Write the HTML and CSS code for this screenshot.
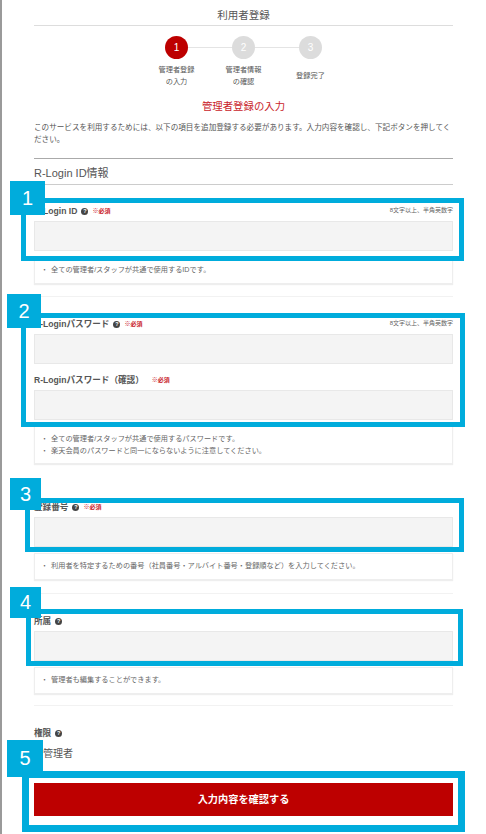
FILE: index.html
```html
<!DOCTYPE html>
<html lang="ja">
<head>
<meta charset="utf-8">
<title>利用者登録</title>
<link rel="stylesheet" href="styles.css">
</head>
<body>
<main class="page">
  <h1 class="title">利用者登録</h1>
  <div class="track">
    <span class="dot dot-on">1</span><span class="link"></span>
    <span class="dot">2</span><span class="link"></span>
    <span class="dot">3</span>
  </div>
  <div class="track-labels">
    <span class="step-label">管理者登録<br>の入力</span>
    <span class="step-label">管理者情報<br>の確認</span>
    <span class="step-label">登録完了</span>
  </div>
  <h2 class="lead">管理者登録の入力</h2>
  <p class="intro">このサービスを利用するためには、以下の項目を追加登録する必要があります。入力内容を確認し、下記ボタンを押してください。</p>
  <h3 class="section">R-Login ID情報</h3>

  <section class="group g1">
    <div class="label-row"><span class="label">R-Login ID</span><span class="help">?</span><span class="req">※必須</span><span class="hint">8文字以上、半角英数字</span></div>
    <div class="input"></div>
    <ul class="note"><li>全ての管理者/スタッフが共通で使用するIDです。</li></ul>
  </section>

  <section class="group g2">
    <div class="label-row"><span class="label">R-Loginパスワード</span><span class="help">?</span><span class="req">※必須</span><span class="hint">8文字以上、半角英数字</span></div>
    <div class="input"></div>
    <div class="label-row second"><span class="label">R-Loginパスワード（確認）</span><span class="req wide">※必須</span></div>
    <div class="input"></div>
    <ul class="note"><li>全ての管理者/スタッフが共通で使用するパスワードです。</li><li>楽天会員のパスワードと同一にならないように注意してください。</li></ul>
  </section>

  <section class="group g3">
    <div class="label-row"><span class="label">登録番号</span><span class="help">?</span><span class="req">※必須</span></div>
    <div class="input"></div>
    <ul class="note"><li>利用者を特定するための番号（社員番号・アルバイト番号・登録順など）を入力してください。</li></ul>
  </section>

  <section class="group g4">
    <div class="label-row"><span class="label">所属</span><span class="help">?</span></div>
    <div class="input"></div>
    <ul class="note"><li>管理者も編集することができます。</li></ul>
  </section>

  <div class="role">
    <div class="label-row"><span class="label">権限</span><span class="help">?</span></div>
    <p class="role-value">管理者</p>
  </div>
  <button class="submit" type="button">入力内容を確認する</button>
</main>

<div class="frame f1"></div><div class="badge b1">1</div>
<div class="frame f2"></div><div class="badge b2">2</div>
<div class="frame f3"></div><div class="badge b3">3</div>
<div class="frame f4"></div><div class="badge b4">4</div>
<div class="frame f5"></div><div class="badge b5">5</div>
</body>
</html>
```
FILE: styles.css
```css
* { box-sizing: border-box; }
html, body { margin: 0; height: 834px; overflow: hidden; background: #fff; }
body {
  position: relative;
  border-left: 2px solid #9a9a9a;
  font-family: "Liberation Sans", "Noto Sans CJK JP", sans-serif;
  color: #555;
}
.page { width: 419px; margin-left: 32px; padding-top: 8px; }
.title {
  margin: 0; height: 18px; line-height: 15px;
  font-size: 10.5px; font-weight: 400; text-align: center; color: #555;
  border-bottom: 1px solid #ddd;
}
.track { display: flex; justify-content: center; align-items: center; margin-top: 10px; height: 23px; }
.dot {
  width: 23px; height: 23px; border-radius: 50%; background: #dcdcdc; color: #fff;
  font-size: 10px; line-height: 23px; text-align: center; flex: none;
}
.dot-on { background: #bd0000; }
.link { width: 44px; height: 1px; background: #e4e4e4; flex: none; }
.track-labels { display: flex; justify-content: center; margin-top: 5px; height: 23px; }
.step-label {
  width: 67px; display: flex; align-items: center; justify-content: center; text-align: center;
  font-size: 7.2px; line-height: 11.5px; color: #555;
}
.lead { margin: 13px 0 0; font-size: 10.4px; line-height: 14px; font-weight: 400; color: #c9242b; text-align: center; }
.intro { margin: 8px 0 0; font-size: 7.6px; line-height: 12px; color: #555; }
.section {
  margin: 12px 0 0; height: 27px; padding-top: 6px;
  font-size: 11px; line-height: 16px; font-weight: 400; color: #555;
  border-top: 1px solid #aaa; border-bottom: 1px solid #ccc;
}
.group { border-bottom: 1px solid #f2f2f2; }
.g1 { margin-top: 20px; height: 92px; }
.g2 { margin-top: 21px; height: 0; }
.g2 { height: 147px; }
.g3 { margin-top: 10px; }
.g3 { margin-top: 36px; height: 93px; padding-top: 0; }
.g4 { margin-top: 21px; height: 91px; }
.label-row { display: flex; align-items: center; height: 12px; }
.second { margin-top: 10px; }
.label { font-size: 8.6px; line-height: 12px; font-weight: 700; color: #555; }
.help {
  width: 7px; height: 7px; border-radius: 50%; margin-left: 4px; background: #444; color: #fff;
  font-size: 5.5px; line-height: 7px; font-weight: 700; text-align: center; flex: none;
}
.req { margin-left: 4px; font-size: 6px; font-weight: 700; color: #c9242b; line-height: 12px; }
.wide { margin-left: 8px; }
.hint { margin-left: auto; font-size: 6px; color: #666; position: relative; top: -2px; }
.input { height: 30px; margin-top: 4px; background: #f4f4f4; border: 1px solid #e8e8e8; }
.note {
  list-style: none; margin: 6px 0 0; padding: 6px 9px 7px;
  background: #fff; border: 1px solid #eee; box-shadow: 0 1px 1px #eee;
  font-size: 7.2px; line-height: 11.5px; color: #666;
}
.note li { padding-left: 7px; position: relative; }
.note li::before { content: "・"; position: absolute; left: -3px; font-size: 7px; }
.role { margin-top: 21px; }
.role-value { margin: 8px 0 0 9px; font-size: 10px; line-height: 14px; color: #555; }
.submit {
  display: block; width: 419px; height: 33px; margin-top: 22px; padding: 0; border: 0;
  background: #bd0000; color: #fff; font: 700 10.2px/33px "Liberation Sans", "Noto Sans CJK JP", sans-serif;
}
.frame { position: absolute; border: 5px solid #00acdc; }
.f1 { left: 19px; top: 198px; width: 443px; height: 63px; }
.f2 { left: 19px; top: 313px; width: 444px; height: 114px; }
.f3 { left: 23px; top: 498px; width: 439px; height: 54px; }
.f4 { left: 24px; top: 609px; width: 437px; height: 57px; }
.f5 { left: 20px; top: 771px; width: 443px; height: 61px; border-width: 7px; }
.badge {
  position: absolute; background: #00acdc; color: #fff; text-align: center;
  font-size: 20px;
}
.b1 { left: 8px; top: 181px; width: 35px; height: 34px; line-height: 34px; }
.b2 { left: 5px; top: 294px; width: 34px; height: 34px; line-height: 34px; }
.b3 { left: 8px; top: 478px; width: 31px; height: 32px; line-height: 32px; }
.b4 { left: 8px; top: 587px; width: 31px; height: 31px; line-height: 31px; }
.b5 { left: 5px; top: 740px; width: 36px; height: 37px; line-height: 37px; }
```
